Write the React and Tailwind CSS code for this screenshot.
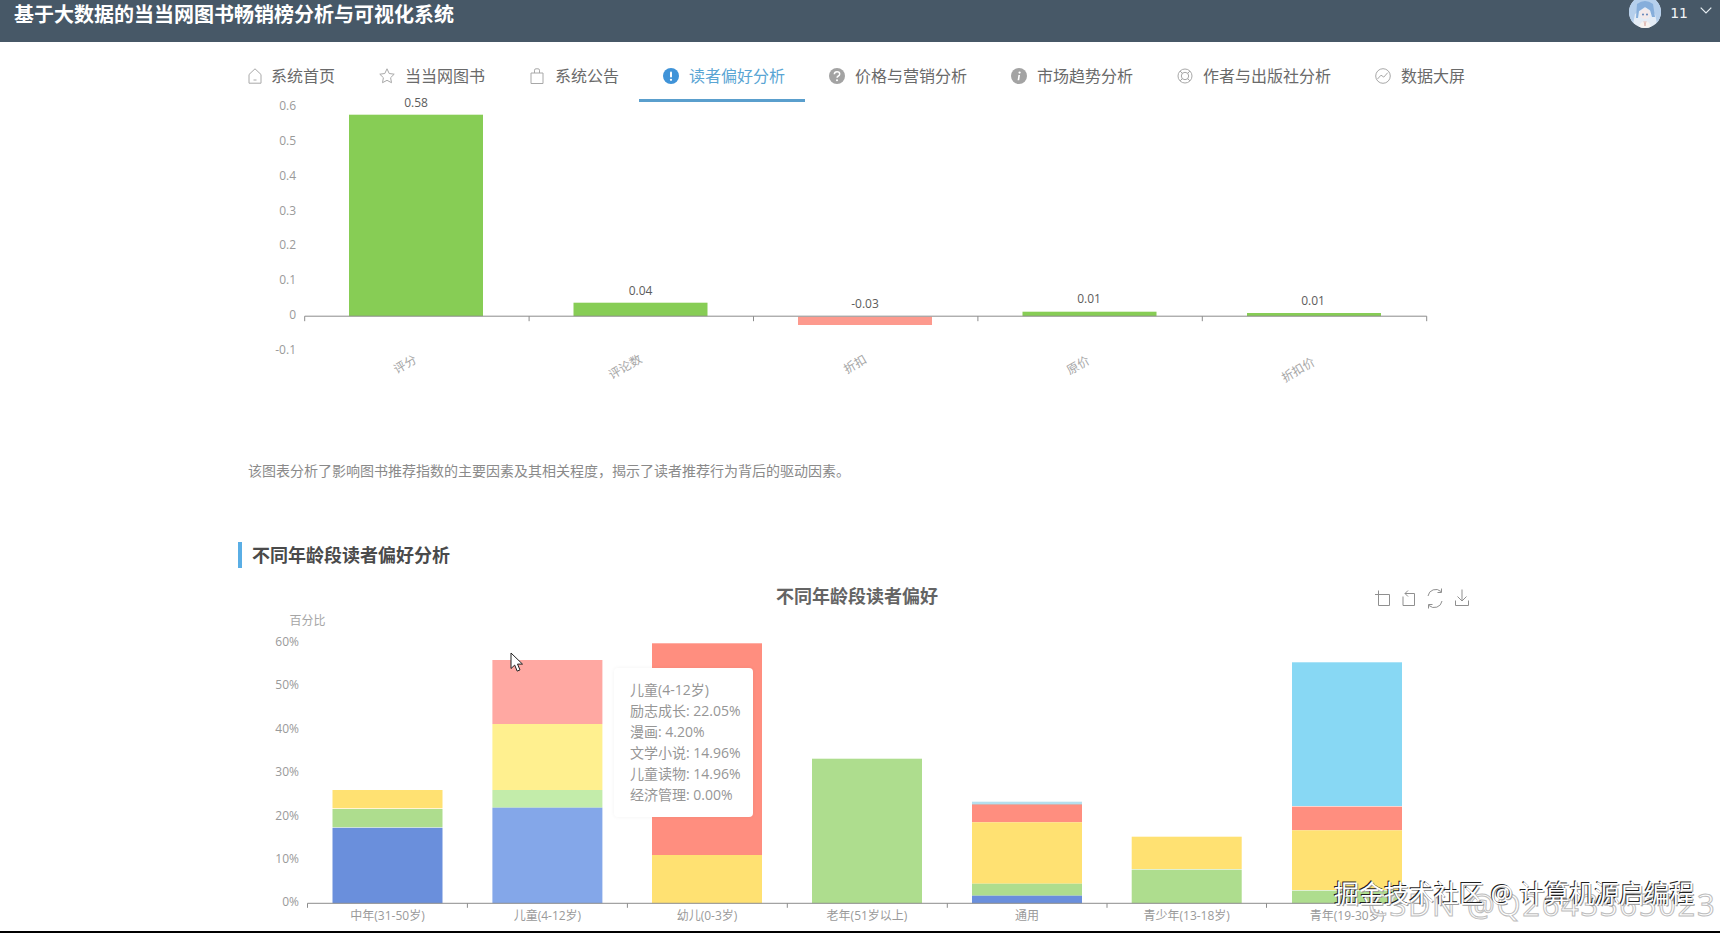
import React from "react";

const FONT = '"Open Sans","Noto Sans CJK SC",sans-serif';

const Ico = ({ children, color = "#a8a8a8" }) => (
  <svg width="16" height="16" viewBox="0 0 16 16" fill="none" stroke={color} strokeWidth="1" className="shrink-0 overflow-visible">
    {children}
  </svg>
);

const icons = {
  home: (
    <Ico>
      <path d="M4 6.500 10 .800 16 6.500v8.700H4z" />
      <path d="M8.500 12h3" />
    </Ico>
  ),
  star: (
    <Ico>
      <path d="M8 .800l2.200 4.700 5 .7-3.600 3.500.9 5L8 12.300l-4.500 2.400.9-5L.800 6.200l5-.7z" />
    </Ico>
  ),
  bag: (
    <Ico>
      <path d="M2 5h12v10.500H2z" />
      <path d="M5.500 5V2.200Q5.500.800 7 .800h2q1.500 0 1.500 1.400V5" />
    </Ico>
  ),
  warn: (
    <svg width="16" height="16" viewBox="0 0 16 16" className="shrink-0">
      <circle cx="8" cy="8" r="8" fill="#3f93d8" />
      <rect x="7" y="3.500" width="2" height="6" rx="1" fill="#fff" />
      <circle cx="8" cy="11.800" r="1.150" fill="#fff" />
    </svg>
  ),
  question: (
    <svg width="16" height="16" viewBox="0 0 16 16" className="shrink-0">
      <circle cx="8" cy="8" r="8" fill="#a3a3a3" />
      <path d="M5.300 6.200Q5.500 3.800 8 3.800q2.700 0 2.700 2.200 0 1.300-1.300 2-1.300.7-1.300 1.800" fill="none" stroke="#fff" strokeWidth="1.500" />
      <circle cx="8" cy="12.200" r="1" fill="#fff" />
    </svg>
  ),
  info: (
    <svg width="16" height="16" viewBox="0 0 16 16" className="shrink-0">
      <circle cx="8" cy="8" r="8" fill="#a3a3a3" />
      <path d="M7.400 7l-.8 5.300h1.600L9 7z" fill="#fff" />
      <circle cx="8.600" cy="4.600" r="1.150" fill="#fff" />
    </svg>
  ),
  help: (
    <Ico>
      <circle cx="8" cy="8" r="7" />
      <circle cx="8" cy="8" r="3.700" />
      <path d="M3 3l2.400 2.400M13 3l-2.400 2.400M3 13l2.400-2.400M13 13l-2.400-2.400" />
    </Ico>
  ),
  line: (
    <Ico>
      <circle cx="8" cy="8" r="7.300" />
      <path d="M2.500 11 6 7.200l2.800 1.900 3.900-4.400" />
    </Ico>
  ),
};

const navItems = [
  ["系统首页", "home"],
  ["当当网图书", "star"],
  ["系统公告", "bag"],
  ["读者偏好分析", "warn", true],
  ["价格与营销分析", "question"],
  ["市场趋势分析", "info"],
  ["作者与出版社分析", "help"],
  ["数据大屏", "line"],
];

const TICK = "#9a9a9a";

const chart1Y = [
  ["0.6", 105.7],
  ["0.5", 140.7],
  ["0.4", 175.7],
  ["0.3", 210.7],
  ["0.2", 244.7],
  ["0.1", 279.7],
  ["0", 314.7],
  ["-0.1", 349.3],
];
const chart1Bars = [
  { x: 349, y: 114.7, h: 201.5, c: "#87cd55", v: "0.58", vx: 416, vy: 102.7, l: "评分", lx: 405, ly: 364 },
  { x: 573.5, y: 302.7, h: 13.5, c: "#87cd55", v: "0.04", vx: 640.5, vy: 290.7, l: "评论数", lx: 625, ly: 366.7 },
  { x: 798, y: 316.7, h: 8.3, c: "#fd9a8e", v: "-0.03", vx: 865, vy: 303.3, l: "折扣", lx: 855, ly: 364 },
  { x: 1022.500, y: 311.7, h: 4.500, c: "#87cd55", v: "0.01", vx: 1089, vy: 298.500, l: "原价", lx: 1078, ly: 365 },
  { x: 1247, y: 313, h: 3.200, c: "#87cd55", v: "0.01", vx: 1313, vy: 300, l: "折扣价", lx: 1298, ly: 369.7 },
];

const chart2Y = [
  ["60%", 641.7],
  ["50%", 684.7],
  ["40%", 728.7],
  ["30%", 771.7],
  ["20%", 815],
  ["10%", 858.7],
  ["0%", 901.7],
];
const B = "#6a8fdc";
const G = "#aedd8e";
const Y = "#ffe172";
const R = "#ff8e7f";
const C = "#88d8f4";
const chart2Bars = [
  {
    x: 332.500,
    l: "中年(31-50岁)",
    s: [
      [790, 808.300, Y],
      [809, 827.300, G],
      [827.800, 903.300, B],
    ],
  },
  {
    x: 492.400,
    l: "儿童(4-12岁)",
    s: [
      [660, 724, "#ffa8a2"],
      [724, 790, "#fff08f"],
      [790, 807.700, "#c3ecaa"],
      [807.700, 903.300, "#84a7e9"],
    ],
  },
  {
    x: 652,
    l: "幼儿(0-3岁)",
    s: [
      [643.300, 855, R],
      [855, 903.300, Y],
    ],
  },
  { x: 812, l: "老年(51岁以上)", s: [[758.700, 903.300, G]] },
  {
    x: 972,
    l: "通用",
    s: [
      [801.700, 804, "#b5dfee"],
      [804, 805, "#d8b0ac"],
      [805, 822.300, R],
      [822.300, 883.700, Y],
      [883.700, 895.700, G],
      [895.700, 903.300, B],
    ],
  },
  {
    x: 1131.700,
    l: "青少年(13-18岁)",
    s: [
      [836.700, 869, Y],
      [869.600, 903.300, G],
    ],
  },
  {
    x: 1292,
    l: "青年(19-30岁)",
    s: [
      [662.300, 806, C],
      [806.600, 830.300, R],
      [830.300, 890, Y],
      [890.600, 903.300, G],
    ],
  },
];

const tooltip = [
  "儿童(4-12岁)",
  "励志成长: 22.05%",
  "漫画: 4.20%",
  "文学小说: 14.96%",
  "儿童读物: 14.96%",
  "经济管理: 0.00%",
];

function Chart1() {
  const ticks = [304.7, 529.100, 753.500, 977.900, 1202.300, 1426.700];
  return (
    <svg width="1240" height="359" viewBox="238 102 1240 359" className="block overflow-visible" style={{ fontFamily: FONT }}>
      {chart1Y.map(([t, y]) => (
        <text key={t} x="296" y={y} textAnchor="end" dominantBaseline="central" fontSize="12" fill={TICK}>
          {t}
        </text>
      ))}
      {chart1Bars.map((b) => (
        <g key={b.l}>
          <rect x={b.x} y={b.y} width="134" height={b.h} fill={b.c} />
          <text x={b.vx} y={b.vy} textAnchor="middle" dominantBaseline="central" fontSize="12" fill="#5c5c5c">
            {b.v}
          </text>
          <text
            x={b.lx}
            y={b.ly}
            textAnchor="middle"
            dominantBaseline="central"
            fontSize="12"
            fill="#a6a6a6"
            transform={`rotate(-30 ${b.lx} ${b.ly})`}
          >
            {b.l}
          </text>
        </g>
      ))}
      <path d="M304.700 316.200H1426.700" stroke="#8c8c8c" strokeWidth="1" />
      {ticks.map((x) => (
        <path key={x} d={`M${x} 316.200v5`} stroke="#8c8c8c" strokeWidth="1" />
      ))}
    </svg>
  );
}

function Chart2() {
  const ticks = [307.500, 467.400, 627.400, 787.300, 947.300, 1107, 1266.500, 1426];
  return (
    <svg width="1240" height="363" viewBox="238 568 1240 363" className="block overflow-visible" style={{ fontFamily: FONT }}>
      <text x="857" y="596" textAnchor="middle" dominantBaseline="central" fontSize="18" fontWeight="700" fill="#646464">
        不同年龄段读者偏好
      </text>
      <g fill="none" stroke="#8f8f8f" strokeWidth="1">
        <path d="M1378.500 590.500v15h11v-11h-14.500" />
        <path d="M1405 593.500l3-3M1405 593.500l3 3M1405 593.500h9.500v12h-11.500v-9" />
        <path d="M1428 596a7.800 7.800 0 0 1 13-4.500M1442 601a7.800 7.800 0 0 1-13 4.500" />
        <path d="M1441.500 588.500v4h-4M1428.500 608.500v-4h4" />
        <path d="M1462 589.500v11.500M1457.500 596.500l4.500 4.500 4.500-4.500M1455.500 600.500v5h13v-5" />
      </g>
      <text x="307.500" y="620.700" textAnchor="middle" dominantBaseline="central" fontSize="12" fill="#a6a6a6">
        百分比
      </text>
      {chart2Y.map(([t, y]) => (
        <text key={t} x="299" y={y} textAnchor="end" dominantBaseline="central" fontSize="12" fill={TICK}>
          {t}
        </text>
      ))}
      {chart2Bars.map((b) => (
        <g key={b.l}>
          {b.s.map(([y1, y2, c]) => (
            <rect key={y1} x={b.x} y={y1} width="110" height={y2 - y1} fill={c} />
          ))}
          <text x={b.x + 55} y="915.700" textAnchor="middle" dominantBaseline="central" fontSize="12" fill={TICK}>
            {b.l}
          </text>
        </g>
      ))}
      <path d="M307.500 903.300H1426" stroke="#8c8c8c" strokeWidth="1" />
      {ticks.map((x) => (
        <path key={x} d={`M${x} 903.300v4.500`} stroke="#8c8c8c" strokeWidth="1" />
      ))}
    </svg>
  );
}

function Avatar() {
  return (
    <svg width="32" height="32" viewBox="0 0 32 32" className="-mt-1 shrink-0">
      <defs>
        <clipPath id="av">
          <circle cx="16" cy="16" r="16" />
        </clipPath>
      </defs>
      <g clipPath="url(#av)">
        <rect width="32" height="32" fill="#e4ecf6" />
        <path d="M0 4h32v24h-4l-2-10-10-7-10 7-2 10H0z" fill="#b5cfec" />
        <path d="M8 8q8-6 16 0l2 13h-3l-2-7-5-3-6 4-1 7H7z" fill="#86aedb" />
        <ellipse cx="16" cy="18" rx="5" ry="5" fill="#f3e9ea" />
        <path d="M10 32q1-7 6-7t6 7z" fill="#f7f4f1" />
        <path d="M15 25l1 5 1-5" fill="none" stroke="#d9a6a0" strokeWidth="0.700" />
        <circle cx="14" cy="18.500" r="0.900" fill="#4f78b4" />
        <circle cx="18" cy="18.500" r="0.900" fill="#4f78b4" />
      </g>
    </svg>
  );
}

export default function App() {
  return (
    <div
      className="relative flex h-[933px] w-[1720px] flex-col overflow-hidden bg-white"
      style={{ fontFamily: FONT }}
    >
      <header className="flex h-[42px] shrink-0 items-start justify-between bg-[#475867] pl-[14px] pr-2 text-white">
        <h1 className="text-[20px] font-bold leading-[30px]">基于大数据的当当网图书畅销榜分析与可视化系统</h1>
        <div className="flex items-center gap-[9px]">
          <Avatar />
          <span className="-mt-[2px] text-[14px] text-[#f2f5f7]" style={{ fontFamily: '"DejaVu Sans",sans-serif' }}>
            11
          </span>
          <svg width="12" height="7" viewBox="0 0 12 7" fill="none" stroke="#e8eef2" strokeWidth="1.200" className="-mt-2 ml-[3px]">
            <path d="M.700.700 6 6 11.300.700" />
          </svg>
        </div>
      </header>

      <nav className="flex h-[60px] shrink-0 pl-[221px]">
        {navItems.map(([label, icon, active]) => (
          <div
            key={label}
            className={
              active
                ? "flex h-[60px] items-center border-b-[3px] border-[#5a9fcd] pl-6 pr-5 pt-[10px] text-[16px] text-[#5aa5d4]"
                : "flex h-[60px] items-center border-b-[3px] border-transparent pl-6 pr-5 pt-[10px] text-[16px] text-[#6a6a6a]"
            }
          >
            <span className="mr-[10px] flex w-4 justify-center">{icons[icon]}</span>
            {label}
          </div>
        ))}
      </nav>

      <main className="relative flex-1 pl-[238px]">
        <Chart1 />
        <p className="ml-[10px] text-[14px] leading-5 text-[#8a8a8a]">
          该图表分析了影响图书推荐指数的主要因素及其相关程度，揭示了读者推荐行为背后的驱动因素。
        </p>
        <h2 className="mt-[61px] flex h-[26px] items-center border-l-4 border-[#5aaee5] pl-[10px] text-[18px] font-semibold text-[#4a4a4a]">
          不同年龄段读者偏好分析
        </h2>
        <div className="relative">
          <Chart2 />
          <div className="absolute left-[376px] top-[100px] h-[149px] w-[139px] rounded-[4px] bg-white pl-4 pt-[11px] text-[14px] leading-[21px] text-[#969696] shadow-[0_0_4px_rgba(0,0,0,0.05)]">
            {tooltip.map((t) => (
              <div key={t} className="whitespace-nowrap">
                {t}
              </div>
            ))}
          </div>
        </div>
      </main>

      <div className="h-[2px] shrink-0 bg-black" />

      <svg width="15" height="21" viewBox="0 0 15 21" className="absolute left-[510px] top-[652px]">
        <path d="M1 1v15.500l3.700-3.400 2.500 6 2.800-1.200-2.500-5.800h5z" fill="#fff" stroke="#222" strokeWidth="1" />
      </svg>

      <div className="absolute left-[1368px] top-[884px] whitespace-nowrap text-[31px] leading-[40px] tracking-[1.700px] text-white/70 [-webkit-text-stroke:1px_#bdbdbd]">
        CSDN @Q2643365023
      </div>
      <div className="absolute left-[1334px] top-[875px] whitespace-nowrap text-[25px] leading-9 text-white [text-shadow:-1px_-1px_0_#1f1f1f,1px_1px_0_#9a9a9a]">
        掘金技术社区 @ 计算机源启编程
      </div>
    </div>
  );
}
